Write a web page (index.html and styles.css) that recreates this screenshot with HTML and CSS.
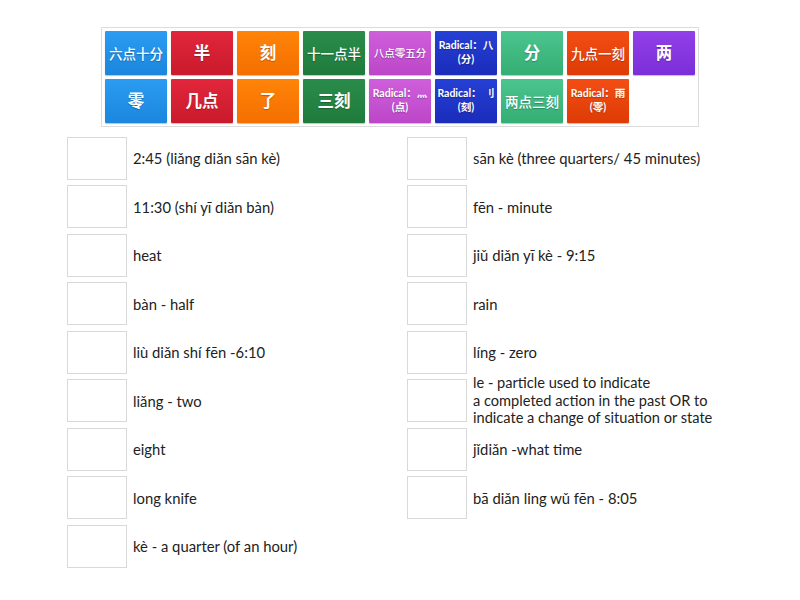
FILE: index.html
```html
<!DOCTYPE html>
<html>
<head>
<meta charset="utf-8">
<link rel="stylesheet" href="styles.css">
</head>
<body>
<div class="page">
  <div class="bank">
    <div class="tile c-blue t14">六点十分</div>
    <div class="tile c-red t16">半</div>
    <div class="tile c-orange t16">刻</div>
    <div class="tile c-green t14">十一点半</div>
    <div class="tile c-magenta t11">八点零五分</div>
    <div class="tile c-navy t10">Radical：八<br>(分)</div>
    <div class="tile c-teal t16">分</div>
    <div class="tile c-vermil t14">九点一刻</div>
    <div class="tile c-purple t16">两</div>
    <div class="tile c-blue t16">零</div>
    <div class="tile c-red t16">几点</div>
    <div class="tile c-orange t16">了</div>
    <div class="tile c-green t16">三刻</div>
    <div class="tile c-magenta t10">Radical：灬<br>(点)</div>
    <div class="tile c-navy t10">Radical： 刂<br>(刻)</div>
    <div class="tile c-teal t14">两点三刻</div>
    <div class="tile c-vermil t10">Radical：雨<br>(零)</div>
  </div>

  <div class="lists">
    <div class="col">
      <div class="item"><div class="slot"></div><div class="label">2:45 (liǎng diǎn sān kè)</div></div>
      <div class="item"><div class="slot"></div><div class="label">11:30 (shí yī diǎn bàn)</div></div>
      <div class="item"><div class="slot"></div><div class="label">heat</div></div>
      <div class="item"><div class="slot"></div><div class="label">bàn - half</div></div>
      <div class="item"><div class="slot"></div><div class="label">liù diǎn shí fēn -6:10</div></div>
      <div class="item"><div class="slot"></div><div class="label">liǎng - two</div></div>
      <div class="item"><div class="slot"></div><div class="label">eight</div></div>
      <div class="item"><div class="slot"></div><div class="label">long knife</div></div>
      <div class="item"><div class="slot"></div><div class="label">kè - a quarter (of an hour)</div></div>
    </div>
    <div class="col">
      <div class="item"><div class="slot"></div><div class="label">sān kè (three quarters/ 45 minutes)</div></div>
      <div class="item"><div class="slot"></div><div class="label">fēn - minute</div></div>
      <div class="item"><div class="slot"></div><div class="label">jiǔ diǎn yī kè - 9:15</div></div>
      <div class="item"><div class="slot"></div><div class="label">rain</div></div>
      <div class="item"><div class="slot"></div><div class="label">líng - zero</div></div>
      <div class="item"><div class="slot"></div><div class="label multi">le - particle used to indicate<br>a completed action in the past OR to<br>indicate a change of situation or state</div></div>
      <div class="item"><div class="slot"></div><div class="label">jǐdiǎn -what time</div></div>
      <div class="item"><div class="slot"></div><div class="label">bā diǎn ling wǔ fēn - 8:05</div></div>
    </div>
  </div>
</div>
</body>
</html>
```

FILE: styles.css
```css
html, body {
  margin: 0;
  padding: 0;
  background: #ffffff;
}

.page {
  padding-top: 27px;
  font-family: Lato, "Noto Sans CJK SC", sans-serif;
  color: #222;
}

.bank {
  width: 590px;
  margin: 0 auto;
  padding: 3px;
  border: 1px solid #dcdcdc;
  display: grid;
  grid-template-columns: repeat(9, 62px);
  grid-auto-rows: 44px;
  column-gap: 4px;
  row-gap: 4px;
}

.tile {
  display: flex;
  align-items: center;
  justify-content: center;
  text-align: center;
  color: #fff;
  font-family: "Noto Sans CJK SC", sans-serif;
  border-radius: 1px;
  box-shadow: 0 1px 1px rgba(0,0,0,0.25);
  text-shadow: 0 1px 1px rgba(0,0,0,0.25);
  line-height: 1.2;
  white-space: nowrap;
  overflow: hidden;
}

.t16 { font-size: 16.5px; font-weight: 700; }
.t14 { font-size: 13.5px; font-weight: 500; }
.t11 { font-size: 10.5px; font-weight: 500; }
.t10 {
  font-family: Lato, "Noto Sans CJK SC", sans-serif;
  font-size: 10.5px;
  font-weight: 700;
  line-height: 1.3;
}

.c-blue    { background: linear-gradient(#2a9cf2, #1b86dd); }
.c-red     { background: linear-gradient(#e2263b, #c91a2c); }
.c-orange  { background: linear-gradient(#ff8408, #f46f00); }
.c-green   { background: linear-gradient(#2a8c4a, #1f7b3c); }
.c-magenta { background: linear-gradient(#d05fdc, #bb47c8); }
.c-navy    { background: linear-gradient(#2540d4, #1a2cbb); }
.c-teal    { background: linear-gradient(#4cc48e, #35ae74); }
.c-vermil  { background: linear-gradient(#f24e14, #de3b06); }
.c-purple  { background: linear-gradient(#9240e8, #7b2ed8); }

.lists {
  margin-top: 9.5px;
  padding-left: 67px;
  display: grid;
  grid-template-columns: 340px 340px;
}

.col {
  display: flex;
  flex-direction: column;
  row-gap: 5.5px;
}

.item {
  display: flex;
  align-items: center;
  column-gap: 6px;
  height: 43px;
}

.slot {
  flex: none;
  width: 58px;
  height: 41px;
  border: 1px solid #d9d9d9;
  background: #fff;
}

.label {
  font-size: 14.8px;
  color: #222;
  line-height: 18px;
}

.label.multi {
  font-size: 14.6px;
  line-height: 17.6px;
}
```
